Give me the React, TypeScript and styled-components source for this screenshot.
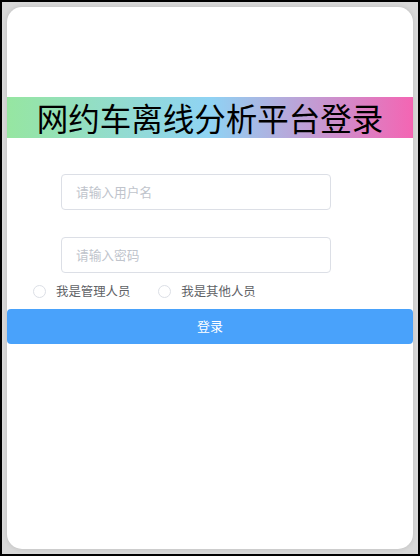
import styled, { createGlobalStyle } from 'styled-components';

const GlobalStyle = createGlobalStyle`
  html, body {
    margin: 0;
    padding: 0;
  }
  body {
    font-family: "Noto Sans CJK SC", "Noto Sans", sans-serif;
  }
`;

const Frame = styled.div`
  box-sizing: border-box;
  width: 420px;
  height: 556px;
  border: 2px solid #000;
  background: #d8d8d8;
  padding: 5px;
  display: flex;
`;

const Card = styled.div`
  flex: 1;
  background: #fff;
  border-radius: 15px;
  box-shadow: 0 0 5px rgba(0, 0, 0, 0.12);
  padding-top: 90px;
  display: flex;
  flex-direction: column;
`;

const Banner = styled.h1`
  margin: 0;
  height: 41px;
  display: flex;
  align-items: center;
  justify-content: center;
  background: linear-gradient(90deg, #96e6a1 0%, #8fd3f4 50%, #f465b3 100%);
  color: #000;
  font-size: 31.5px;
  font-weight: 400;
  line-height: 41px;
`;

const Form = styled.form`
  display: flex;
  flex-direction: column;
  margin: 0;
`;

const Field = styled.input<{ $gap: number }>`
  box-sizing: border-box;
  width: 270px;
  height: 36px;
  margin-left: 54px;
  margin-top: ${(p) => p.$gap}px;
  padding: 0 14px 2px;
  border: 1px solid #dcdfe6;
  border-radius: 4px;
  outline: none;
  font-family: "Noto Sans CJK SC", sans-serif;
  font-size: 12.7px;
  color: #606266;

  &::placeholder {
    color: #c0c4cc;
  }
`;

const RadioRow = styled.div`
  display: flex;
  align-items: center;
  gap: 28px;
  margin: 10px 0 0 26px;
  height: 16px;
`;

const RadioLabel = styled.label`
  display: flex;
  align-items: center;
  gap: 10px;
  font-size: 12.4px;
  line-height: 16px;
  color: #606266;
  cursor: pointer;
`;

const RadioDot = styled.span`
  box-sizing: border-box;
  width: 13px;
  height: 13px;
  border: 1px solid #dcdfe6;
  border-radius: 50%;
  background: #fff;
`;

const LoginButton = styled.button`
  margin-top: 10px;
  height: 35px;
  padding: 0 0 2px;
  border: none;
  border-radius: 4px;
  background: #49a2fb;
  color: #fff;
  font-family: "Noto Sans CJK SC", sans-serif;
  font-size: 13px;
  cursor: pointer;
`;

export default function App() {
  return (
    <>
      <GlobalStyle />
      <Frame>
        <Card>
          <Banner>网约车离线分析平台登录</Banner>
          <Form onSubmit={(e) => e.preventDefault()}>
            <Field $gap={36} placeholder="请输入用户名" />
            <Field $gap={27} type="password" placeholder="请输入密码" />
            <RadioRow>
              <RadioLabel>
                <RadioDot />
                我是管理人员
              </RadioLabel>
              <RadioLabel>
                <RadioDot />
                我是其他人员
              </RadioLabel>
            </RadioRow>
            <LoginButton type="submit">登录</LoginButton>
          </Form>
        </Card>
      </Frame>
    </>
  );
}
